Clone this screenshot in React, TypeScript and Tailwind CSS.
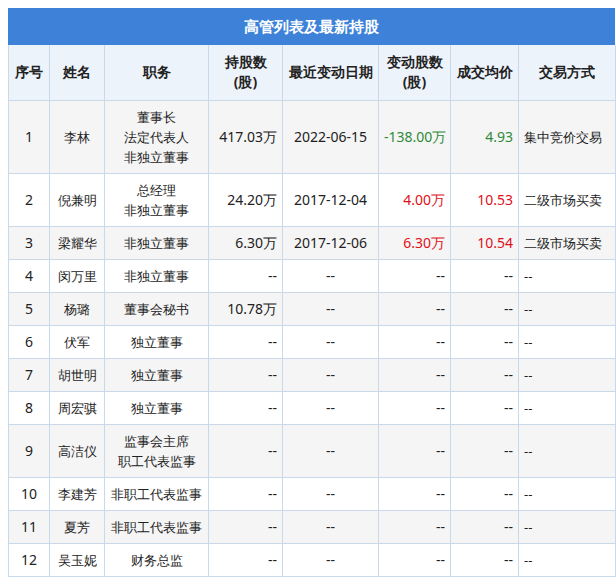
import React from "react";

type R = { n: string; name: string; role: string[]; hold: string; date: string; chg: string; chgC?: string; price: string; priceC?: string; way: string; h: string };
const G = "text-[#2e8b3a]";
const RD = "text-[#e0101a]";
const rows: R[] = [
  { n: "1", name: "李林", role: ["董事长", "法定代表人", "非独立董事"], hold: "417.03万", date: "2022-06-15", chg: "-138.00万", chgC: G, price: "4.93", priceC: G, way: "集中竞价交易", h: "h-[73px]" },
  { n: "2", name: "倪兼明", role: ["总经理", "非独立董事"], hold: "24.20万", date: "2017-12-04", chg: "4.00万", chgC: RD, price: "10.53", priceC: RD, way: "二级市场买卖", h: "h-[53px]" },
  { n: "3", name: "梁耀华", role: ["非独立董事"], hold: "6.30万", date: "2017-12-06", chg: "6.30万", chgC: RD, price: "10.54", priceC: RD, way: "二级市场买卖", h: "h-[33px]" },
  { n: "4", name: "闵万里", role: ["非独立董事"], hold: "--", date: "--", chg: "--", price: "--", way: "--", h: "h-[33px]" },
  { n: "5", name: "杨璐", role: ["董事会秘书"], hold: "10.78万", date: "--", chg: "--", price: "--", way: "--", h: "h-[33px]" },
  { n: "6", name: "伏军", role: ["独立董事"], hold: "--", date: "--", chg: "--", price: "--", way: "--", h: "h-[33px]" },
  { n: "7", name: "胡世明", role: ["独立董事"], hold: "--", date: "--", chg: "--", price: "--", way: "--", h: "h-[33px]" },
  { n: "8", name: "周宏骐", role: ["独立董事"], hold: "--", date: "--", chg: "--", price: "--", way: "--", h: "h-[33px]" },
  { n: "9", name: "高洁仪", role: ["监事会主席", "职工代表监事"], hold: "--", date: "--", chg: "--", price: "--", way: "--", h: "h-[53px]" },
  { n: "10", name: "李建芳", role: ["非职工代表监事"], hold: "--", date: "--", chg: "--", price: "--", way: "--", h: "h-[33px]" },
  { n: "11", name: "夏芳", role: ["非职工代表监事"], hold: "--", date: "--", chg: "--", price: "--", way: "--", h: "h-[33px]" },
  { n: "12", name: "吴玉妮", role: ["财务总监"], hold: "--", date: "--", chg: "--", price: "--", way: "--", h: "h-[33px]" },
];

const cjk = "font-[family-name:'Noto_Sans_CJK_SC',sans-serif]";
const serif = "font-[family-name:'Liberation_Serif','Noto_Sans_CJK_SC',serif]";
const td = "border border-[#c9d9ea] px-[5px] py-0 text-[13px] leading-[20px] whitespace-nowrap";

export default function App() {
  return (
    <div className="w-[616px] h-[584px] bg-white pt-[8px] pl-[8px] overflow-hidden">
      <div className="w-[607px]">
        <div className={`h-[37px] bg-[#3d82d8] text-white text-[15px] font-bold flex items-center justify-center ${cjk}`}>高管列表及最新持股</div>
        <table className="w-[607px] border-collapse table-fixed">
          <colgroup>
            <col className="w-[41px]" /><col className="w-[55px]" /><col className="w-[104px]" /><col className="w-[74px]" />
            <col className="w-[96px]" /><col className="w-[72px]" /><col className="w-[68px]" /><col className="w-[97px]" />
          </colgroup>
          <thead>
            <tr className={`h-[55px] bg-[#edf3fb] ${cjk} font-bold`}>
              {["序号", "姓名", "职务", "持股数\n(股)", "最近变动日期", "变动股数\n(股)", "成交均价", "交易方式"].map((t) => (
                <th key={t} className={`${td} text-[#222] text-[14px] whitespace-pre-line text-center px-0 border-t-0`}>{t}</th>
              ))}
            </tr>
          </thead>
          <tbody>
            {rows.map((r, i) => (
              <tr key={r.n} className={`${r.h} ${i % 2 === 0 ? "bg-[#f5f5f5]" : "bg-white"}`}>
                <td className={`${td} text-[#222] text-center ${serif} text-[14px]`}>{r.n}</td>
                <td className={`${td} text-[#222] text-center ${cjk}`}>{r.name}</td>
                <td className={`${td} text-[#222] text-center ${cjk}`}>{r.role.map((x) => <div key={x}>{x}</div>)}</td>
                <td className={`${td} text-[#222] text-right ${serif} text-[14px]`}>{r.hold}</td>
                <td className={`${td} text-[#222] text-center ${serif} text-[14px]`}>{r.date}</td>
                <td className={`${td} text-right ${serif} text-[14px] ${r.chgC ?? "text-[#222]"}`}>{r.chg}</td>
                <td className={`${td} text-right ${serif} text-[14px] ${r.priceC ?? "text-[#222]"}`}>{r.price}</td>
                <td className={`${td} text-[#222] text-left ${cjk}`}>{r.way}</td>
              </tr>
            ))}
          </tbody>
        </table>
      </div>
    </div>
  );
}
